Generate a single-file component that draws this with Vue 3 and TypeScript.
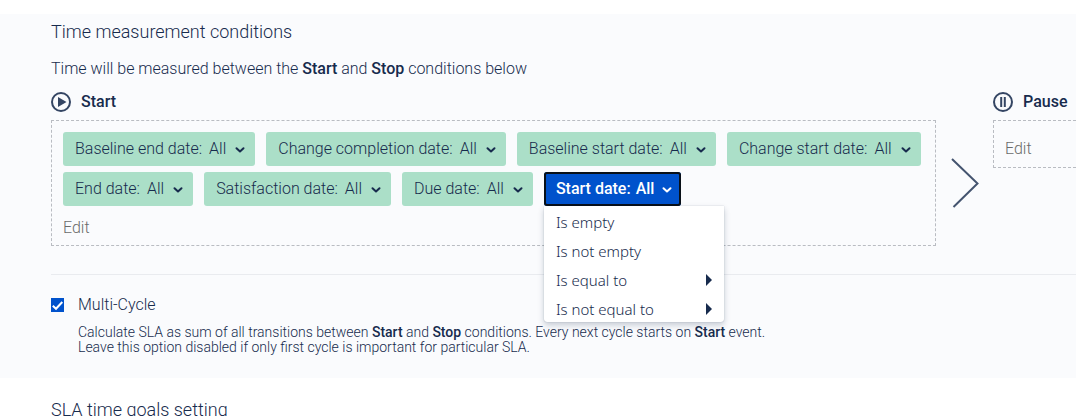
<script setup lang="ts">
import { ref } from 'vue'

interface Condition {
  id: string
  label: string
  value: string
}

interface MenuItem {
  label: string
  nested: boolean
}

const conditions: Condition[] = [
  { id: 'baseline-end', label: 'Baseline end date:', value: 'All' },
  { id: 'change-completion', label: 'Change completion date:', value: 'All' },
  { id: 'baseline-start', label: 'Baseline start date:', value: 'All' },
  { id: 'change-start', label: 'Change start date:', value: 'All' },
  { id: 'end', label: 'End date:', value: 'All' },
  { id: 'satisfaction', label: 'Satisfaction date:', value: 'All' },
  { id: 'due', label: 'Due date:', value: 'All' },
  { id: 'start', label: 'Start date:', value: 'All' },
]

const menuItems: MenuItem[] = [
  { label: 'Is empty', nested: false },
  { label: 'Is not empty', nested: false },
  { label: 'Is equal to', nested: true },
  { label: 'Is not equal to', nested: true },
]

const openId = ref<string | null>('start')
const multiCycle = ref(true)

function toggle(id: string): void {
  openId.value = openId.value === id ? null : id
}
</script>

<template>
  <main class="page">
    <section class="panel">
      <h2 class="title">Time measurement conditions</h2>
      <p class="lead">
        Time will be measured between the <strong>Start</strong> and <strong>Stop</strong> conditions below
      </p>

      <div class="stages">
        <div class="stage">
          <h3 class="stage-title">
            <svg width="20" height="20" viewBox="0 0 20 20" aria-hidden="true">
              <circle cx="10" cy="10" r="9" fill="none" stroke="#344563" stroke-width="2" />
              <path d="M7 5v10l8.500-5z" fill="#344563" />
            </svg>
            Start
          </h3>
          <div class="box">
            <div class="chips">
              <div v-for="c in conditions" :key="c.id" class="chip-slot">
                <button
                  type="button"
                  class="chip"
                  :class="{ open: openId === c.id }"
                  :aria-expanded="openId === c.id"
                  @click="toggle(c.id)"
                >
                  <span>{{ c.label }}</span>
                  <span class="value">{{ c.value }}</span>
                  <svg class="chevron" width="10" height="8" viewBox="0 0 10 8" aria-hidden="true">
                    <path d="M1.500 2.200L5 5.500l3.500-3.300" fill="none" stroke="currentColor" stroke-width="2" stroke-linecap="round" stroke-linejoin="round" />
                  </svg>
                </button>
                <div v-if="openId === c.id" class="menu" role="menu">
                  <button v-for="m in menuItems" :key="m.label" type="button" role="menuitem" class="menu-item">
                    {{ m.label }}
                    <svg v-if="m.nested" width="6" height="12" viewBox="0 0 6 12" aria-hidden="true">
                      <path d="M0 0l6 6-6 6z" fill="#172b4d" />
                    </svg>
                  </button>
                </div>
              </div>
            </div>
            <button type="button" class="edit">Edit</button>
          </div>
        </div>

        <svg class="arrow" width="28" height="50" viewBox="0 0 28 50" aria-hidden="true">
          <path d="M1 1l25.500 24.500L2.500 49" fill="none" stroke="#44546f" stroke-width="2" />
        </svg>

        <div class="stage">
          <h3 class="stage-title">
            <svg width="20" height="20" viewBox="0 0 20 20" aria-hidden="true">
              <circle cx="10" cy="10" r="9" fill="none" stroke="#344563" stroke-width="2" />
              <path d="M8.200 5v10M11.800 5v10" stroke="#344563" stroke-width="2" />
            </svg>
            Pause
          </h3>
          <div class="box clipped">
            <button type="button" class="edit">Edit</button>
          </div>
        </div>
      </div>

      <div class="option">
        <span class="tick-wrap">
          <input id="multi-cycle" v-model="multiCycle" type="checkbox" class="tick" />
          <svg v-if="multiCycle" class="tick-mark" width="13" height="14" viewBox="0 0 13 14" aria-hidden="true">
            <path d="M1.800 7.800l3.200 3L11.300 4" fill="none" stroke="#fff" stroke-width="2" />
          </svg>
        </span>
        <div>
          <label for="multi-cycle" class="option-label">Multi-Cycle</label>
          <p class="hint">
            Calculate SLA as sum of all transitions between <strong>Start</strong> and <strong>Stop</strong> conditions.
            Every next cycle starts on <strong>Start</strong> event.<br />
            Leave this option disabled if only first cycle is important for particular SLA.
          </p>
        </div>
      </div>
    </section>

    <h2 class="title next">SLA time goals setting</h2>
  </main>
</template>

<style>
html {
  overflow: hidden;
}
body {
  margin: 0;
  background: #fff;
}
</style>

<style scoped>
.page {
  padding-top: 14px;
  font-family: Roboto, "Liberation Sans", sans-serif;
  font-weight: 300;
  font-size: 16px;
  line-height: 20px;
  color: #172b4d;
}
.page button {
  margin: 0;
  border: 0;
  background: none;
  font: inherit;
  color: inherit;
  cursor: pointer;
}
strong {
  font-weight: 500;
}
.panel {
  padding: 6px 0 23px 51px;
  background: #fafbfd;
}
.title {
  margin: 0;
  font-size: 18px;
  line-height: 24px;
  font-weight: 300;
}
.lead {
  margin: 15px 0 12px;
}
.stages {
  display: grid;
  grid-template-columns: minmax(0, 1fr) 57px 83px;
  align-items: start;
  padding-bottom: 28px;
  border-bottom: 1px solid #e9ebef;
}
.stage-title {
  display: flex;
  align-items: center;
  gap: 10px;
  height: 22px;
  margin: 0 0 7px;
  font-size: 16px;
  font-weight: 500;
}
.box {
  padding: 11px 11px 7px;
  border: 1px dashed #b9bcc2;
}
.clipped {
  padding: 18px 11px 8px;
  border-right: 0;
}
.chips {
  display: flex;
  flex-wrap: wrap;
  gap: 6px 11px;
  margin-bottom: 12px;
}
.chip-slot {
  position: relative;
}
.page .chip {
  display: flex;
  align-items: center;
  height: 34px;
  padding: 0 10px 1px 12px;
  border-radius: 3px;
  background: #abdfc8;
  white-space: nowrap;
}
.value {
  margin-left: 7px;
}
.chevron {
  margin: 2px 0 0 9px;
}
.page .chip.open {
  padding-right: 9px;
  background: #0052cc;
  color: #fff;
  font-weight: 500;
  box-shadow: inset 0 0 0 2px #091018;
}
.open .value {
  margin-left: 5px;
}
.open .chevron {
  margin-left: 8px;
}
.menu {
  position: absolute;
  z-index: 2;
  top: 34px;
  left: 0;
  width: 180px;
  border-radius: 0 0 3px 3px;
  background: #fff;
  box-shadow: 0 0 1px rgba(9, 30, 66, 0.4), 0 3px 6px rgba(9, 30, 66, 0.22);
}
.page .menu-item {
  display: flex;
  align-items: center;
  justify-content: space-between;
  width: 100%;
  height: 29px;
  padding: 2px 12px 0;
  font-family: "Noto Sans", "Open Sans", sans-serif;
  font-weight: 300;
  font-size: 15px;
}
.page .edit {
  display: block;
  padding: 0;
  color: #6b6b6b;
}
.arrow {
  justify-self: center;
  margin-top: 67px;
}
.option {
  display: flex;
  gap: 14px;
  padding-top: 20px;
}
.tick-wrap {
  position: relative;
  width: 13px;
  height: 14px;
  margin-top: 3px;
}
.tick {
  appearance: none;
  display: block;
  width: 100%;
  height: 100%;
  margin: 0;
  border: 1px solid #0052cc;
}
.tick:checked {
  background: #0052cc;
}
.tick-mark {
  position: absolute;
  top: 0;
  left: 0;
  pointer-events: none;
}
.hint {
  margin: 10px 0 0;
  font-size: 14px;
  line-height: 15px;
}
.next {
  margin: 20px 0 0 51px;
}
</style>
